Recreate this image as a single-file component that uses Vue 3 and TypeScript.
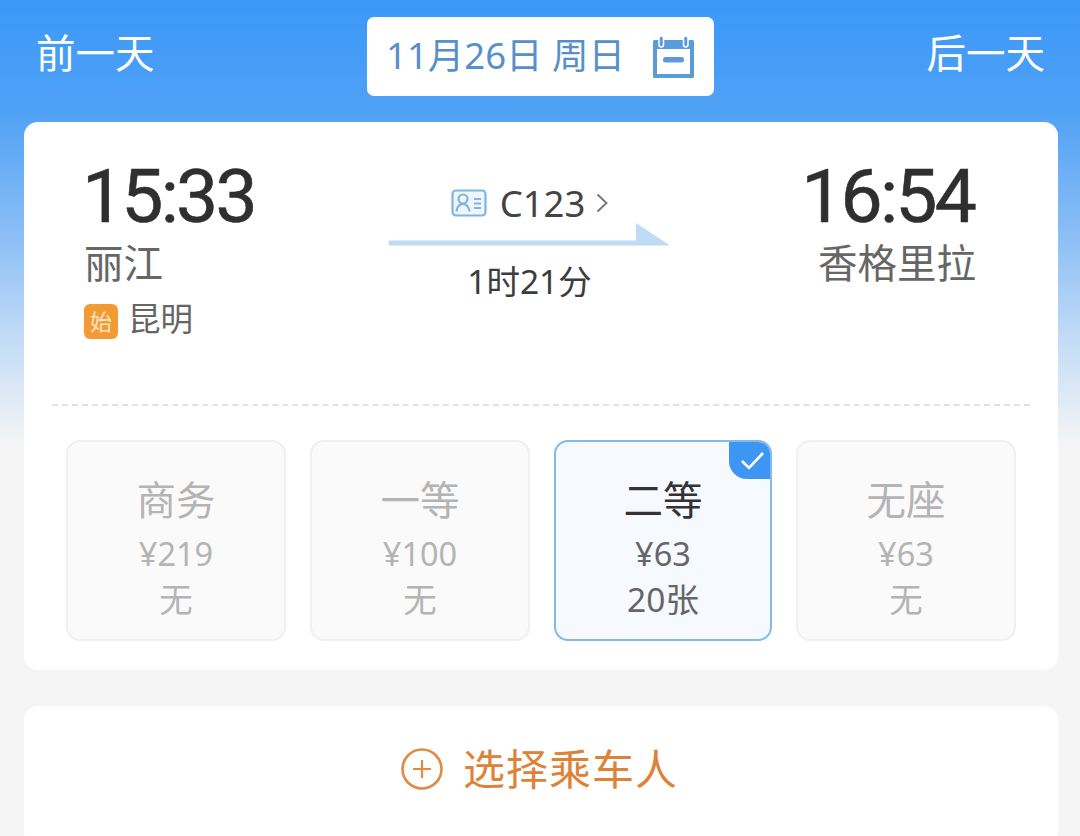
<template>
  <div class="page">
    <!-- top date switcher -->
    <header class="date-bar">
      <span class="day-link">前一天</span>
      <div class="date-pill">
        <span class="date-text">11月26日 周日</span>
        <svg class="cal-icon" width="44" height="44" viewBox="0 0 44 44">
          <path d="M1 6.500A1.500 1.500 0 0 1 2.500 5h38A1.500 1.500 0 0 1 42 6.500v35a1.500 1.500 0 0 1-1.500 1.500h-38A1.500 1.500 0 0 1 1 41.500z" fill="#5b9bd9" />
          <rect x="5" y="14" width="33" height="25" fill="#fff" />
          <rect x="7" y="1" width="4.500" height="11" rx="2.200" fill="#5b9bd9" stroke="#fff" stroke-width="1.500" />
          <rect x="31.500" y="1" width="4.500" height="11" rx="2.200" fill="#5b9bd9" stroke="#fff" stroke-width="1.500" />
          <rect x="11" y="22" width="21" height="5.500" rx="2.500" fill="#5b9bd9" />
        </svg>
      </div>
      <span class="day-link">后一天</span>
    </header>

    <section class="card train-card">
      <div class="route">
        <div class="stop">
          <div class="time">15:33</div>
          <div class="city">丽江</div>
          <div class="origin">
            <span class="origin-tag">始</span>
            <span>昆明</span>
          </div>
        </div>
        <div class="middle">
          <div class="train-no">
            <svg width="36" height="28" viewBox="0 0 36 28" fill="none" stroke="#7fb5de" stroke-width="2.200">
              <rect x="1.500" y="1.500" width="33" height="25" rx="3.500" fill="#eef6fc" />
              <circle cx="12" cy="10" r="4.500" />
              <path d="M5.500 22.500c.8-5 3.500-7.500 6.500-7.500s5.700 2.500 6.500 7.500" />
              <path d="M23 10h7M23 14.500h7M23 19h7" stroke-width="1.800" />
            </svg>
            <span class="train-code">C123</span>
            <svg class="chevron" width="12" height="24" viewBox="0 0 12 24" fill="none" stroke="#777" stroke-width="1.900">
              <path d="M1.500 3.500l9 8.500-9 8.500" />
            </svg>
          </div>
          <svg class="arrow" width="284" height="26" viewBox="0 0 284 26">
            <path d="M2 17.500h246V0l34 22.500H4a2.500 2.500 0 0 1-2-5z" fill="#bfdcf7" />
          </svg>
          <div class="duration">1时21分</div>
        </div>
        <div class="stop stop-end">
          <div class="time">16:54</div>
          <div class="city">香格里拉</div>
        </div>
      </div>

      <div class="divider"></div>

      <div class="seats">
        <div v-for="seat in seats" :key="seat.name" class="seat" :class="{ active: seat.active }">
          <div class="seat-name">{{ seat.name }}</div>
          <div class="seat-price">¥{{ seat.price }}</div>
          <div class="seat-left">{{ seat.left }}</div>
          <div v-if="seat.active" class="seat-check">
            <svg width="28" height="24" viewBox="0 0 28 24" fill="none" stroke="#fff" stroke-width="2.600">
              <path d="M3 12l7 7 14-15" />
            </svg>
          </div>
        </div>
      </div>
    </section>

    <section class="card add-card">
      <svg width="44" height="44" viewBox="0 0 44 44" fill="none" stroke="#e08a42" stroke-width="2.600">
        <circle cx="22" cy="22" r="19.500" />
        <path d="M22 13v18M13 22h18" stroke-width="2.200" />
      </svg>
      <span class="add-text">选择乘车人</span>
    </section>
  </div>
</template>

<script setup lang="ts">
interface Seat {
  name: string
  price: number
  left: string
  active?: boolean
}

const seats: Seat[] = [
  { name: '商务', price: 219, left: '无' },
  { name: '一等', price: 100, left: '无' },
  { name: '二等', price: 63, left: '20张', active: true },
  { name: '无座', price: 63, left: '无' }
]
</script>

<style scoped>
.page {
  width: 1080px;
  height: 836px;
  overflow: hidden;
  background: linear-gradient(180deg, #3b98f8 0, #4fa1f5 110px, #8ebff6 240px, #c3dcf6 340px, #f5f5f5 445px);
  font-family: "Noto Sans", "Noto Sans CJK SC", sans-serif;
}

/* 顶部日期栏 */
.date-bar {
  display: flex;
  justify-content: space-between;
  align-items: center;
  height: 122px;
  padding: 0 35px 16px 36px;
  box-sizing: border-box;
}

.day-link {
  font-size: 39.500px;
  color: #fff;
  line-height: 50px;
}

.date-pill {
  display: flex;
  align-items: center;
  gap: 27px;
  width: 347px;
  height: 79px;
  margin-top: 7px;
  padding-left: 19px;
  box-sizing: border-box;
  background: #fff;
  border-radius: 7px;
}

.date-text {
  font-size: 36.500px;
  color: #5790c9;
  white-space: nowrap;
  line-height: 50px;
  margin-top: -3px;
}

.cal-icon {
  flex-shrink: 0;
}

/* 卡片 */
.card {
  margin: 0 22px 0 24px;
  background: #fff;
  border-radius: 14px;
}

.train-card {
  height: 548px;
  padding: 0 28px;
  box-sizing: border-box;
}

.route {
  display: flex;
  justify-content: space-between;
  height: 282px;
  padding: 32px 54px 0 32px;
  box-sizing: border-box;
}

.stop {
  width: 220px;
}

.stop-end {
  text-align: right;
}

.time {
  padding-top: 1px;
  font-size: 75px;
  line-height: 83px;
  letter-spacing: -2.800px;
  color: #2f2f2f;
  font-family: Roboto, sans-serif;
  -webkit-text-stroke: 0.6px #2f2f2f;
}

.stop:not(.stop-end) .time {
  margin-left: -2px;
}

.stop-end .time {
  margin-right: 2px;
}

.city {
  font-size: 39.500px;
  line-height: 50px;
  color: #666;
}

.origin {
  display: flex;
  align-items: center;
  gap: 10px;
  margin-top: 7px;
  font-size: 32.500px;
  line-height: 48px;
  color: #666;
}

.origin-tag {
  width: 34px;
  height: 35px;
  margin-top: 4px;
  border-radius: 6px;
  background: #f39a35;
  color: #fde4c4;
  font-size: 22px;
  line-height: 35px;
  text-align: center;
}

.middle {
  display: flex;
  flex-direction: column;
  align-items: center;
  width: 284px;
  padding-top: 27px;
  margin-left: -1px;
}

.train-no {
  display: flex;
  align-items: center;
  gap: 13px;
  height: 44px;
}

.chevron {
  margin-left: -2px;
}

.train-code {
  font-size: 36.500px;
  color: #444;
  line-height: 44px;
}

.arrow {
  display: block;
  margin-top: -2px;
}

.duration {
  margin-top: 9px;
  font-size: 33.500px;
  line-height: 46px;
  color: #3c3c3c;
}

.divider {
  border-top: 2px dashed #e2e2e2;
}

/* 席别 */
.seats {
  display: flex;
  justify-content: space-between;
  padding: 34px 14px 0;
}

.seat {
  position: relative;
  width: 220px;
  height: 201px;
  box-sizing: border-box;
  padding-top: 33px;
  border: 2px solid #f0f0f0;
  border-radius: 14px;
  background: #fafafa;
  text-align: center;
  color: #b4b4b4;
  overflow: hidden;
}

.seat.active {
  width: 218px;
  border-color: #82bbe8;
  background: #f6faff;
  color: #666;
}

.seat-name {
  font-size: 39.500px;
  line-height: 50px;
}

.seat.active .seat-name {
  color: #333;
}

.seat-price {
  font-size: 32.500px;
  line-height: 50px;
  margin-top: 4px;
}

.seat-left {
  font-size: 33.500px;
  line-height: 44px;
  margin-top: -2px;
}

.seat-check {
  position: absolute;
  top: 0;
  right: 0;
  width: 41px;
  height: 37px;
  padding-left: 6px;
  box-sizing: border-box;
  background: #3d96f4;
  border-bottom-left-radius: 18px;
  display: flex;
  align-items: center;
  justify-content: center;
}

/* 选择乘车人 */
.add-card {
  display: flex;
  justify-content: center;
  align-items: center;
  gap: 19px;
  height: 140px;
  padding: 0 4px 14px 0;
  box-sizing: border-box;
  margin-top: 36px;
}

.add-text {
  font-size: 42px;
  color: #dd8338;
  letter-spacing: 1px;
  margin-top: -5px;
}
</style>

<style>
body {
  background: #f5f5f5;
}
</style>
